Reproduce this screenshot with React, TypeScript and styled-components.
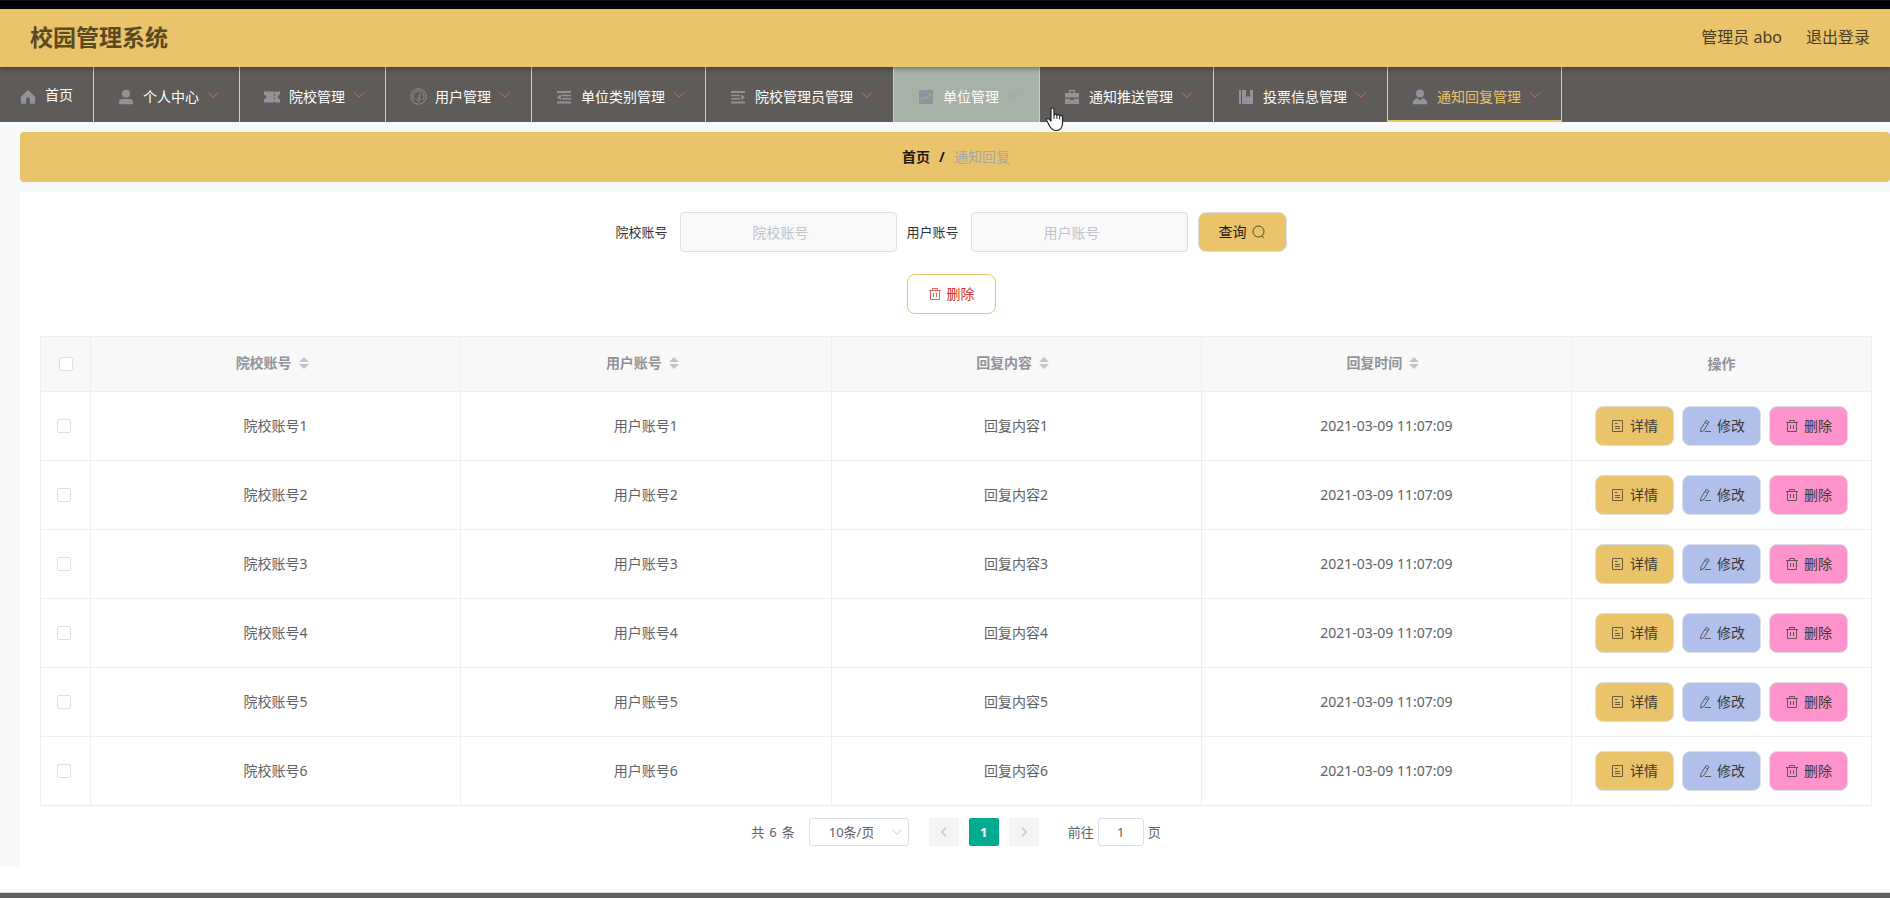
import React from 'react';
import styled, { createGlobalStyle, css } from 'styled-components';

const gold = '#eac46b';
const line = '#ebeef5';

const GlobalStyle = createGlobalStyle`
  *, *::before, *::after { box-sizing: border-box; }
  body {
    margin: 0;
    background: #fff;
    color: #606266;
    font-family: "Noto Sans", "Noto Sans CJK SC", sans-serif;
    font-size: 14px;
    line-height: 20px;
  }
  button, input, select { font: inherit; }
  a { color: inherit; text-decoration: none; }
`;

const Page = styled.div`
  display: flex;
  flex-direction: column;
  min-height: 100vh;
`;

const TopStrip = styled.div`
  height: 9px;
  background: #000;
  border-top: 1px solid #151515;
`;

const Header = styled.header`
  position: relative;
  z-index: 1;
  display: flex;
  align-items: center;
  justify-content: space-between;
  height: 58px;
  padding: 0 20px 2px 30px;
  background: ${gold};
  box-shadow: 0 1px 6px rgba(0, 0, 0, 0.4);
`;

const Title = styled.h1`
  margin: 0;
  color: #5b4a20;
  font-size: 23px;
  line-height: 32px;
  font-weight: 700;
`;

const Account = styled.div`
  display: flex;
  gap: 24px;
  color: #4a3e22;
  font-size: 16px;
  line-height: 24px;
`;

const Nav = styled.nav`
  display: flex;
  height: 55px;
  background: #5e5b58;
`;

type NavState = 'normal' | 'hover' | 'active';

const NavArrow = styled.span`
  display: flex;
  margin: 0 0 4px 8px;
  color: #b85c80;
`;

const NavItem = styled.a<{ $state: NavState; $home?: boolean }>`
  display: flex;
  align-items: center;
  padding: 4px 20px 0 ${p => (p.$home ? 16 : 20)}px;
  border-right: 1px solid #cfcecd;
  color: #fff;
  white-space: nowrap;
  ${p => p.$state === 'hover' && css`
    background: #a6b1a8;
    ${NavArrow} { color: #bf94a0; }
  `}
  ${p => p.$state === 'active' && css`
    color: ${gold};
    box-shadow: inset 0 -2px 0 ${gold};
  `}
`;

const HomeLabel = styled.span`
  padding-bottom: 3px;
`;

const NavIcon = styled.span`
  display: flex;
  justify-content: center;
  width: 24px;
  margin-right: 5px;
  color: #909399;
`;

const Main = styled.main`
  padding: 10px 0 0 20px;
  background: #f7f8fa;
`;

const Breadcrumb = styled.nav`
  display: flex;
  justify-content: center;
  align-items: center;
  gap: 9px;
  height: 50px;
  padding-left: 2px;
  border-radius: 4px;
  background: ${gold};
  color: #1c1a14;
  font-weight: 700;
`;

const Current = styled.span`
  color: #a4a8a6;
  font-weight: 400;
`;

const Panel = styled.section`
  margin-top: 10px;
  padding: 20px 18px 20px 20px;
  background: #fff;
`;

const SearchForm = styled.form`
  display: flex;
  justify-content: center;
  align-items: center;
  gap: 10px;
  padding-right: 10px;
`;

const Field = styled.label`
  display: flex;
  align-items: center;
  gap: 12px;
  color: #303133;
  font-size: 13px;
`;

const TextInput = styled.input`
  width: 217px;
  height: 40px;
  padding: 0 30px 0 15px;
  border: 1px solid #dcdfe6;
  border-radius: 4px;
  background: #f9f9fa;
  color: #606266;
  font-size: 14px;
  text-align: center;
  &::placeholder { color: #c0c4cc; }
`;

type Tone = 'gold' | 'outline' | 'blue' | 'pink';
const fills: Record<Tone, string> = {
  gold: gold,
  outline: '#fff',
  blue: '#b0c0eb',
  pink: '#ff93cb',
};

const Button = styled.button<{ $tone: Tone; $compact?: boolean }>`
  display: flex;
  align-items: center;
  gap: 5px;
  height: 40px;
  padding: 0 ${p => (p.$compact ? 15 : 20)}px;
  border: 1px solid ${p => (p.$tone === 'outline' ? gold : '#dcdfe6')};
  border-radius: 8px;
  background: ${p => fills[p.$tone]};
  color: ${p => (p.$tone === 'outline' ? '#d8321c' : p.$compact ? '#3d3830' : '#1c1a14')};
  white-space: nowrap;
  svg { opacity: 0.75; }
`;

const BulkActions = styled.div`
  display: flex;
  justify-content: center;
  padding: 22px 10px 22px 0;
`;

const Table = styled.table`
  width: 100%;
  table-layout: fixed;
  border-collapse: separate;
  border-spacing: 0;
  border: solid ${line};
  border-width: 1px 0 0 1px;
`;

const HeadCell = styled.th`
  height: 55px;
  padding: 0;
  border: solid ${line};
  border-width: 0 1px 1px 0;
  background: #f8f8f9;
  color: #909399;
  font-weight: 700;
`;

const Cell = styled.td`
  height: 69px;
  padding: 0;
  border: solid ${line};
  border-width: 0 1px 1px 0;
  text-align: center;
`;

const CheckCell = styled(Cell)`
  padding-right: 4px;
`;

const SortLabel = styled.span`
  display: flex;
  justify-content: center;
  align-items: center;
  padding-bottom: 2px;
`;

const SortCaret = styled.span`
  display: flex;
  justify-content: center;
  width: 24px;
`;

const CheckBox = styled.input`
  appearance: none;
  display: block;
  width: 14px;
  height: 14px;
  margin: 0 auto;
  border: 1px solid #dcdfe6;
  border-radius: 2px;
  background: #fff;
`;

const RowActions = styled.div`
  display: flex;
  justify-content: center;
  gap: 8px;
`;

const Pagination = styled.div`
  display: flex;
  justify-content: center;
  align-items: center;
  margin-top: 12px;
  font-size: 13px;
`;

const Total = styled.span`
  display: flex;
  gap: 5px;
`;

const PageSize = styled.span`
  position: relative;
  display: flex;
  align-items: center;
  margin: 0 20px 0 14px;
`;

const PageSizeSelect = styled.select`
  appearance: none;
  width: 100px;
  height: 28px;
  padding: 0 35px 0 19px;
  border: 1px solid #dcdfe6;
  border-radius: 3px;
  background: #fff;
  color: #606266;
`;

const SelectArrow = styled.span`
  position: absolute;
  right: 6px;
  display: flex;
  color: #c0c4cc;
  pointer-events: none;
`;

const Pager = styled.div`
  display: flex;
  gap: 10px;
  margin-right: 29px;
`;

const PageButton = styled.button<{ $current?: boolean }>`
  display: flex;
  justify-content: center;
  align-items: center;
  width: 30px;
  height: 28px;
  padding: 0;
  border: 0;
  border-radius: 2px;
  background: ${p => (p.$current ? '#00ab91' : '#f4f4f5')};
  color: ${p => (p.$current ? '#fff' : '#c0c4cc')};
  font-weight: 700;
`;

const Jumper = styled.label`
  display: flex;
  align-items: center;
  gap: 4px;
`;

const JumpInput = styled.input`
  width: 46px;
  height: 28px;
  padding: 0 3px;
  border: 1px solid #dcdfe6;
  border-radius: 3px;
  background: #fff;
  color: #606266;
  text-align: center;
`;

const Footer = styled.footer`
  height: 6px;
  margin-top: auto;
  border-top: 1px solid #d8d8d8;
  background: #606060;
`;

const Pointer = styled.svg`
  position: absolute;
  z-index: 2;
  left: 1045px;
  top: 107px;
  pointer-events: none;
`;

const Solid = ({ children }: { children: React.ReactNode }) => (
  <svg width="16" height="16" viewBox="0 0 16 16" fill="currentColor" aria-hidden="true">{children}</svg>
);

const Stroke = ({ children }: { children: React.ReactNode }) => (
  <svg width="14" height="14" viewBox="0 0 14 14" fill="none" stroke="currentColor" strokeWidth="1" aria-hidden="true">{children}</svg>
);

const Chevron = ({ dir, size = 12, weight = 1.1 }: { dir: 'down' | 'left' | 'right'; size?: number; weight?: number }) => (
  <svg width={size} height={size} viewBox="0 0 12 12" fill="none" stroke="currentColor" strokeWidth={weight} aria-hidden="true">
    <path d={dir === 'down' ? 'M1.5 3.8 6 8.3l4.500-4.500' : dir === 'left' ? 'M8 1.8 3.8 6 8 10.2' : 'M4 1.8 8.2 6 4 10.2'} />
  </svg>
);

const icons = {
  home: <Solid><path d="M8 1 .9 7.4v7.4h5.2V10.400a1.900 1.900 0 0 1 3.800 0v4.400h5.200V7.400z" /></Solid>,
  user: <Solid><circle cx="8" cy="4.800" r="4" /><path d="M1 15.200v-2A3.200 3.200 0 0 1 4.200 10h7.600a3.200 3.200 0 0 1 3.200 3.200v2z" /></Solid>,
  ticket: <Solid><path d="M0 2.500h9.700l.8 1.300.8-1.300H16v3.300a2.200 2.200 0 0 0 0 4.400v3.300h-4.700l-.8-1.300-.8 1.300H0v-3.300a2.200 2.200 0 0 0 0-4.400zM10 5v1.800h1V5zm0 4v1.800h1V9z" fillRule="evenodd" /></Solid>,
  gauge: (
    <svg width="17" height="17" viewBox="0 0 17 17" fill="none" stroke="currentColor" aria-hidden="true">
      <circle cx="8.500" cy="8.500" r="7.700" />
      <path d="M4.300 12a5.500 5.500 0 1 1 8.400 0" />
      <path d="m10.300 5.200-1.300 5" />
      <circle cx="8.600" cy="11.700" r="1.500" />
    </svg>
  ),
  fold: <Solid><path d="M1 2h14v2H1zm5 3.700h9v1.600H6zm0 3.300h9v1.600H6zm-5 3.500h14v2H1zM4.800 5.200v6L1 8.200z" /></Solid>,
  unfold: <Solid><path d="M1 2h14v2H1zm0 3.700h9v1.600H1zM1 9h9v1.600H1zm0 3.500h14v2H1zM11.200 5.200v6L15 8.200z" /></Solid>,
  chart: <Solid><path d="M1 1h14v14H1z" /><path d="m3.500 11 3-3.300 2.200 1.700 4-4.400m-2.200 0h2.300v2.300" fill="none" stroke="#a6b1a8" /></Solid>,
  briefcase: <Solid><path d="M5 1h6v3h4v4.500H1V4h4zm1.300 1.300V4h3.400V2.300zM1 9.700h5.500V11h3V9.700H15V15H1z" fillRule="evenodd" /></Solid>,
  book: <Solid><path d="M1 1h2v14H1zm3 0h4v7.500l2-1.700 2 1.700V1h3v14H4z" /></Solid>,
  custom: <Solid><circle cx="8" cy="4.500" r="4" /><path d="M5.400 9 8 11.500 10.600 9c3 .7 4.900 3 4.900 6.200H.5C.5 12 2.400 9.700 5.400 9z" /></Solid>,
};

const SearchIcon = () => <Stroke><circle cx="6.500" cy="6.500" r="5.500" /><path d="m9.700 10.800 2.300 2.400" /></Stroke>;
const TrashIcon = () => <Stroke><path d="M1 3.500h12M4.500 3.500v-2h5v2M2.500 3.500v9h9v-9M5.500 6v4M8.500 6v4" /></Stroke>;
const DetailIcon = () => <Stroke><path d="M1.500 1.500h10v11h-10zM4 4.500h2.500M4 7.500h5M4 9.500h5" /></Stroke>;
const EditIcon = () => <Stroke><path d="m8.300 1.300 2.800 1.700-5.300 8.500-3.300 1.500.5-3.300zM7.100 3.400l2.700 1.700M6.800 12.500H13" /></Stroke>;

const SortArrows = () => (
  <svg width="10" height="14" viewBox="0 0 10 14" fill="#c0c4cc" aria-hidden="true">
    <path d="M5 1l5 5H0zM5 13l5-5H0z" />
  </svg>
);

const menu: { label: string; icon: keyof typeof icons; state?: NavState }[] = [
  { label: '个人中心', icon: 'user' },
  { label: '院校管理', icon: 'ticket' },
  { label: '用户管理', icon: 'gauge' },
  { label: '单位类别管理', icon: 'fold' },
  { label: '院校管理员管理', icon: 'unfold' },
  { label: '单位管理', icon: 'chart', state: 'hover' },
  { label: '通知推送管理', icon: 'briefcase' },
  { label: '投票信息管理', icon: 'book' },
  { label: '通知回复管理', icon: 'custom', state: 'active' },
];

const columns = ['院校账号', '用户账号', '回复内容', '回复时间'];

const rows = [1, 2, 3, 4, 5, 6].map(n => ({
  id: n,
  cells: [`院校账号${n}`, `用户账号${n}`, `回复内容${n}`, '2021-03-09 11:07:09'],
}));

export default function App() {
  return (
    <Page>
      <GlobalStyle />
      <TopStrip />
      <Header>
        <Title>校园管理系统</Title>
        <Account>
          <span>管理员 abo</span>
          <a href="#logout">退出登录</a>
        </Account>
      </Header>
      <Nav>
        <NavItem href="#home" $state="normal" $home>
          <NavIcon>{icons.home}</NavIcon><HomeLabel>首页</HomeLabel>
        </NavItem>
        {menu.map(item => (
          <NavItem key={item.label} href="#menu" $state={item.state ?? 'normal'}>
            <NavIcon>{icons[item.icon]}</NavIcon>
            {item.label}
            <NavArrow><Chevron dir="down" /></NavArrow>
          </NavItem>
        ))}
      </Nav>
      <Main>
        <Breadcrumb>
          <a href="#home">首页</a>
          <span>/</span>
          <Current>通知回复</Current>
        </Breadcrumb>
        <Panel>
          <SearchForm onSubmit={e => e.preventDefault()}>
            <Field>院校账号<TextInput type="text" placeholder="院校账号" /></Field>
            <Field>用户账号<TextInput type="text" placeholder="用户账号" /></Field>
            <Button type="submit" $tone="gold">查询<SearchIcon /></Button>
          </SearchForm>
          <BulkActions>
            <Button type="button" $tone="outline"><TrashIcon />删除</Button>
          </BulkActions>
          <Table>
            <colgroup>
              <col width="50" />
              {columns.map(c => <col key={c} />)}
              <col width="300" />
            </colgroup>
            <thead>
              <tr>
                <HeadCell><CheckBox type="checkbox" aria-label="全选" /></HeadCell>
                {columns.map(c => (
                  <HeadCell key={c}>
                    <SortLabel>{c}<SortCaret><SortArrows /></SortCaret></SortLabel>
                  </HeadCell>
                ))}
                <HeadCell>操作</HeadCell>
              </tr>
            </thead>
            <tbody>
              {rows.map(row => (
                <tr key={row.id}>
                  <CheckCell><CheckBox type="checkbox" aria-label={row.cells[0]} /></CheckCell>
                  {row.cells.map(text => <Cell key={text}>{text}</Cell>)}
                  <Cell>
                    <RowActions>
                      <Button type="button" $tone="gold" $compact><DetailIcon />详情</Button>
                      <Button type="button" $tone="blue" $compact><EditIcon />修改</Button>
                      <Button type="button" $tone="pink" $compact><TrashIcon />删除</Button>
                    </RowActions>
                  </Cell>
                </tr>
              ))}
            </tbody>
          </Table>
          <Pagination>
            <Total><span>共</span><span>6</span><span>条</span></Total>
            <PageSize>
              <PageSizeSelect aria-label="每页条数" defaultValue="10">
                <option value="10">10条/页</option>
              </PageSizeSelect>
              <SelectArrow><Chevron dir="down" weight={1} /></SelectArrow>
            </PageSize>
            <Pager>
              <PageButton type="button" aria-label="上一页"><Chevron dir="left" weight={1.6} /></PageButton>
              <PageButton type="button" $current>1</PageButton>
              <PageButton type="button" aria-label="下一页"><Chevron dir="right" weight={1.6} /></PageButton>
            </Pager>
            <Jumper>前往<JumpInput type="text" defaultValue="1" />页</Jumper>
          </Pagination>
        </Panel>
      </Main>
      <Footer />
      <Pointer width="20" height="25" viewBox="0 0 20 25" aria-hidden="true">
        <path
          d="M6 2.500c0-2 3-2 3 0V8c.3-1.300 2.700-1.200 2.900.3.500-1.100 2.600-.9 2.800.6.700-.9 2.800-.5 2.800 1.300v6.300c0 4-2.500 7-6.500 7-3.500 0-5-2-6.500-4.800L1.700 13.500c-.8-1.600 1.300-2.600 2.500-1.300L6 14.200z"
          fill="#fff" stroke="#222" strokeWidth="1.200" strokeLinejoin="round"
        />
        <path d="M9 8v4M11.900 8.500V12M14.700 9v3.500" stroke="#222" strokeWidth="1" />
      </Pointer>
    </Page>
  );
}
